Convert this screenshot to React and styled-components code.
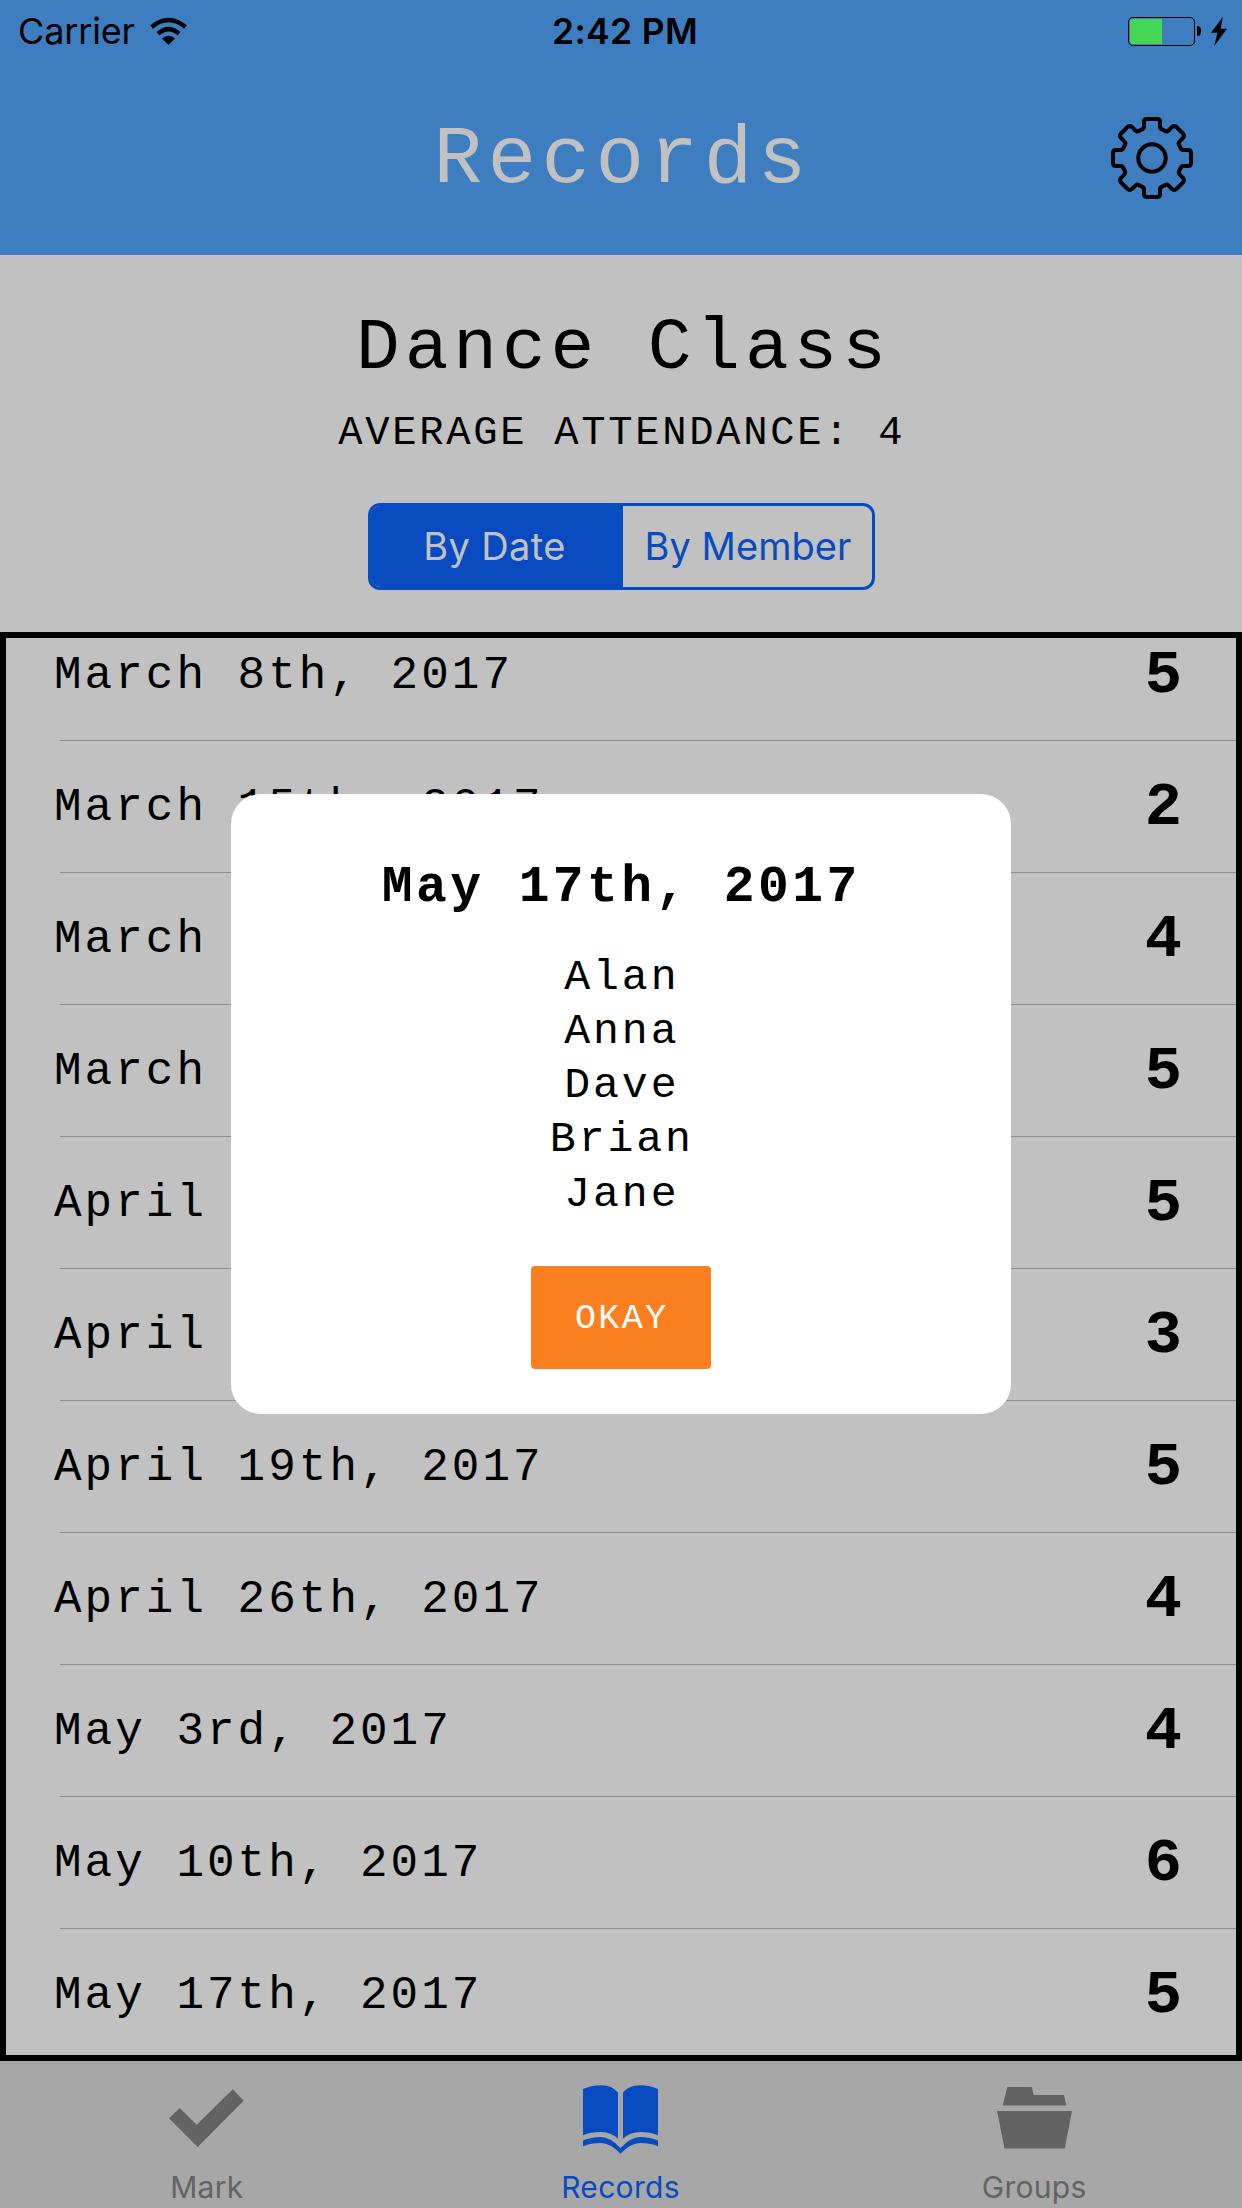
import React from "react";
import styled, { createGlobalStyle } from "styled-components";

const GlobalStyle = createGlobalStyle`
  *, *::before, *::after { box-sizing: border-box; }
  body { margin: 0; background: #c1c1c1; }
`;

const mono = `"Liberation Mono", "Courier New", monospace`;
const sans = `Inter, Roboto, sans-serif`;
const blue = "#084bc0";
const tracking = "0.0667em";
const inset = "0.04em";

const Screen = styled.div`
  position: relative;
  display: flex;
  flex-direction: column;
  width: 1242px;
  height: 2208px;
  overflow: hidden;
  background: #c1c1c1;
  color: #000;
  font-family: ${mono};
  white-space: nowrap;
`;

const Header = styled.header`
  flex: none;
  height: 255px;
  background: #3e7dc0;
`;

const StatusBar = styled.div`
  display: grid;
  grid-template-columns: 1fr auto 1fr;
  align-items: center;
  height: 62px;
  padding: 0 15px 0 18px;
  font-family: ${sans};
  font-size: 36px;
  line-height: 62px;
`;

const StatusGroup = styled.div`
  display: flex;
  align-items: center;
  gap: ${(p) => p.$gap}px;
  justify-content: ${(p) => (p.$end ? "flex-end" : "flex-start")};
`;

const Carrier = styled.span`
  letter-spacing: -0.15px;
`;

const Clock = styled.time`
  font-weight: 600;
  font-size: 35.5px;
  letter-spacing: 0.3px;
  line-height: 60px;
  padding-top: 2px;
  padding-left: 5px;
`;

const Battery = styled.div`
  display: flex;
  align-items: center;
  gap: 2px;
`;

const BatteryCase = styled.div`
  width: 67px;
  height: 29px;
  padding: 1px;
  border: 1px solid #000;
  border-radius: 5px;
`;

const BatteryLevel = styled.div`
  width: 32px;
  height: 25px;
  border-radius: 3px 0 0 3px;
  background: #44d754;
`;

const BatteryTip = styled.div`
  width: 4px;
  height: 10px;
  border-radius: 0 4px 4px 0;
  background: #000;
`;

const NavBar = styled.div`
  display: grid;
  grid-template-columns: 1fr auto 1fr;
  align-items: center;
  height: 192px;
  padding-right: 49px;
  padding-left: 49px;
`;

const NavTitle = styled.h1`
  grid-column: 2;
  margin: 0;
  padding-top: 6px;
  padding-left: ${inset};
  font-size: 81px;
  line-height: 102px;
  font-weight: 400;
  letter-spacing: ${tracking};
  color: #c1c1c1;
`;

const IconButton = styled.button`
  justify-self: end;
  display: flex;
  padding: 0;
  border: 0;
  background: none;
`;

const Summary = styled.section`
  flex: none;
  display: flex;
  flex-direction: column;
  align-items: center;
  height: 377px;
  padding-top: 49px;
`;

const GroupName = styled.h2`
  margin: 0;
  padding-left: ${tracking};
  font-size: 72.9px;
  line-height: 90px;
  font-weight: 400;
  letter-spacing: ${tracking};
`;

const Average = styled.p`
  margin: 12.5px 0 0;
  padding-left: ${inset};
  font-size: 40.5px;
  line-height: 52px;
  letter-spacing: ${tracking};
`;

const Segmented = styled.div`
  display: flex;
  width: 507px;
  height: 87px;
  margin-top: 44.5px;
  border: 3px solid ${blue};
  border-radius: 12px;
  overflow: hidden;
`;

const Segment = styled.button`
  flex: ${(p) => (p.$active ? "0 0 252px" : "1")};
  padding: ${(p) => (p.$active ? "0 4px 1px 0" : "0 0 1px 2px")};
  border: 0;
  background: ${(p) => (p.$active ? blue : "transparent")};
  color: ${(p) => (p.$active ? "#c1c1c1" : blue)};
  font-family: ${sans};
  font-size: 38px;
  letter-spacing: ${(p) => (p.$active ? 0.4 : 0.05)}px;
`;

const ListFrame = styled.main`
  flex: none;
  height: 1429px;
  border: 6px solid #000;
  overflow: hidden;
`;

const List = styled.ul`
  margin: -29px 0 0;
  padding: 0;
  list-style: none;
`;

const Row = styled.li`
  height: 132px;
  padding-left: 54px;
`;

const RowBody = styled.div`
  display: flex;
  align-items: center;
  justify-content: space-between;
  height: 132px;
  padding-right: 54px;
  border-bottom: 1px solid #8e8e90;
`;

const RowDate = styled.span`
  margin-left: -6px;
  padding-top: 3px;
  font-size: 45.9px;
  letter-spacing: ${tracking};
`;

const RowCount = styled.span`
  padding-top: 1px;
  font-size: 62px;
  font-weight: 700;
`;

const TabBar = styled.nav`
  flex: none;
  display: flex;
  height: 147px;
  padding-right: 1px;
  background: #a7a7a7;
`;

const Tab = styled.a`
  flex: 1;
  display: flex;
  flex-direction: column;
  align-items: center;
  color: ${(p) => (p.$active ? blue : "#636363")};
  font-family: ${sans};
  font-size: 30px;
  line-height: 36px;
  letter-spacing: 0.3px;
`;

const TabIcon = styled.span`
  display: flex;
  height: 108px;
  padding-top: 23px;
`;

const Overlay = styled.div`
  position: absolute;
  inset: 0;
  display: grid;
  place-items: center;
`;

const Dialog = styled.section`
  display: flex;
  flex-direction: column;
  align-items: center;
  width: 780px;
  height: 620px;
  padding-top: 61px;
  border-radius: 30px;
  background: #fff;
`;

const DialogTitle = styled.h3`
  margin: 0;
  padding-left: 0.01em;
  font-size: 51.3px;
  line-height: 65px;
  font-weight: 700;
  letter-spacing: ${tracking};
`;

const Names = styled.ul`
  margin: 30.5px 0 0;
  padding: 0 0 0 ${inset};
  list-style: none;
  text-align: center;
  font-size: 43.2px;
  line-height: 54.3px;
  letter-spacing: ${tracking};
`;

const OkayButton = styled.button`
  width: 180px;
  height: 103px;
  margin-top: 44px;
  padding: 4px 0 0 ${inset};
  border: 0;
  border-radius: 4px;
  background: #fb7f1e;
  color: #fff;
  font-family: ${mono};
  font-size: 35.1px;
  letter-spacing: ${tracking};
`;

const WifiIcon = () => (
  <svg width="37" height="27" viewBox="0 0 37 27">
    <path d="M18.5 27 12 20.5Q18.5 14.8 25 20.5Z" fill="#000" />
    <path d="M8 15.6Q18.5 6.6 29 15.6M1.6 9Q18.5 -4.8 35.4 9" fill="none" stroke="#000" strokeWidth="4.4" />
  </svg>
);

const BoltIcon = () => (
  <svg width="16" height="29" viewBox="0 0 16 29">
    <path d="M11.8 0 0 15.8H6.4L3.2 29 16 11.8H9.6Z" fill="#000" />
  </svg>
);

const gearQuarter =
  "M0-39H5Q8-39 8-36V-31.5Q8-29.5 10-28.7L13.5-26.9Q15-26.2 16.2-27.3L20-31Q22.3-32.8 24.5-31L31-24.5Q32.8-22.3 31-20L27.3-16.2Q26.2-15 26.9-13.5L28.7-10Q29.5-8 31.5-8H36Q39-8 39-5V0";

const GearIcon = () => (
  <svg width="82" height="82" viewBox="-41 -41 82 82" fill="none" stroke="#000" strokeWidth="4" strokeLinecap="round">
    {[0, 90, 180, 270].map((a) => (
      <path key={a} d={gearQuarter} transform={`rotate(${a})`} />
    ))}
    <circle r="13.7" />
  </svg>
);

const CheckIcon = () => (
  <svg width="75" height="68" viewBox="0 0 75 68" fill="currentColor">
    <path d="M0 34.3 10.7 24 27.7 40.7 63.7 5.3 74.7 16.7 28.7 63Z" />
  </svg>
);

const BookIcon = () => (
  <svg width="75" height="70" viewBox="0 0 75 70" fill="currentColor">
    <path d="M0 5Q8 1.2 18 1.2Q29 1.2 35 8.5V54.7Q28 48 18 48Q8 48 0 51.3Z" />
    <path d="M75 5Q67 1.2 57 1.2Q46 1.2 40 8.5V54.7Q47 48 57 48Q67 48 75 51.3Z" />
    <path d="M0 56.5Q8 53 18 53Q27 53 37.5 64Q48 53 57 53Q67 53 75 56.5V62.2Q67 59 57 59Q48 59 37.5 69.7Q27 59 18 59Q8 59 0 62.2Z" />
  </svg>
);

const FolderIcon = () => (
  <svg width="75" height="68" viewBox="0 0 75 68" fill="currentColor">
    <path d="M10.3 3H34.7L36.7 11H67L69.3 21.5H5.7Z" />
    <path d="M0 27H75L67.7 64.5H7.5Z" />
  </svg>
);

const records = [
  ["March 8th, 2017", 5],
  ["March 15th, 2017", 2],
  ["March 22nd, 2017", 4],
  ["March 29th, 2017", 5],
  ["April 5th, 2017", 5],
  ["April 12th, 2017", 3],
  ["April 19th, 2017", 5],
  ["April 26th, 2017", 4],
  ["May 3rd, 2017", 4],
  ["May 10th, 2017", 6],
  ["May 17th, 2017", 5],
];

const members = ["Alan", "Anna", "Dave", "Brian", "Jane"];

const tabs = [
  { label: "Mark", Icon: CheckIcon },
  { label: "Records", Icon: BookIcon, active: true },
  { label: "Groups", Icon: FolderIcon },
];

export default function App() {
  return (
    <Screen>
      <GlobalStyle />
      <Header>
        <StatusBar>
          <StatusGroup $gap={15}>
            <Carrier>Carrier</Carrier>
            <WifiIcon />
          </StatusGroup>
          <Clock>2:42 PM</Clock>
          <StatusGroup $end $gap={10}>
            <Battery>
              <BatteryCase>
                <BatteryLevel />
              </BatteryCase>
              <BatteryTip />
            </Battery>
            <BoltIcon />
          </StatusGroup>
        </StatusBar>
        <NavBar>
          <NavTitle>Records</NavTitle>
          <IconButton aria-label="Settings">
            <GearIcon />
          </IconButton>
        </NavBar>
      </Header>

      <Summary>
        <GroupName>Dance Class</GroupName>
        <Average>AVERAGE ATTENDANCE: 4</Average>
        <Segmented>
          <Segment $active>By Date</Segment>
          <Segment>By Member</Segment>
        </Segmented>
      </Summary>

      <ListFrame>
        <List>
          {records.map(([date, count]) => (
            <Row key={date}>
              <RowBody>
                <RowDate>{date}</RowDate>
                <RowCount>{count}</RowCount>
              </RowBody>
            </Row>
          ))}
        </List>
      </ListFrame>

      <TabBar>
        {tabs.map(({ label, Icon, active }) => (
          <Tab key={label} $active={active}>
            <TabIcon>
              <Icon />
            </TabIcon>
            {label}
          </Tab>
        ))}
      </TabBar>

      <Overlay>
        <Dialog role="dialog">
          <DialogTitle>May 17th, 2017</DialogTitle>
          <Names>
            {members.map((name) => (
              <li key={name}>{name}</li>
            ))}
          </Names>
          <OkayButton>OKAY</OkayButton>
        </Dialog>
      </Overlay>
    </Screen>
  );
}
